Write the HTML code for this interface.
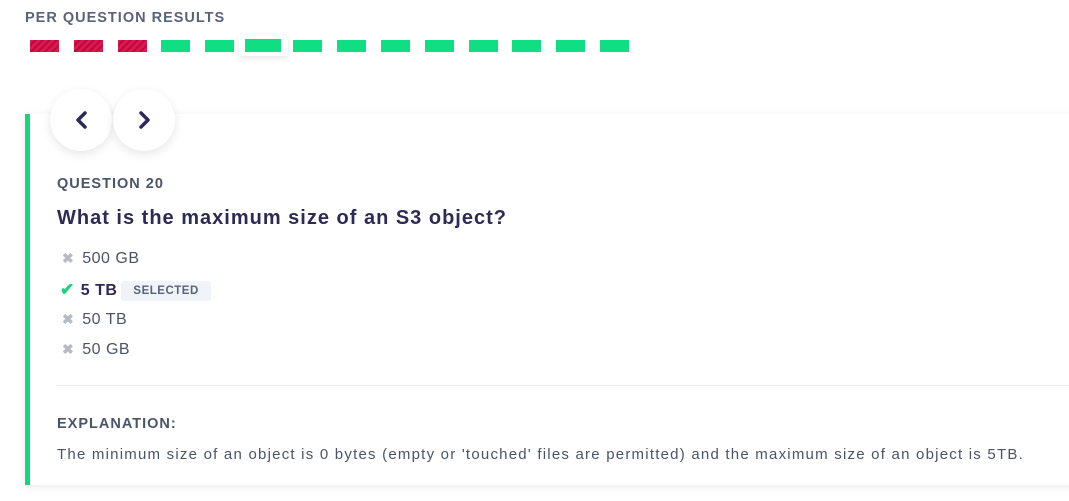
<!DOCTYPE html>
<html><head><style>
body{margin:0;width:1069px;height:501px;background:#fff;font-family:"Liberation Sans",sans-serif;position:relative;overflow:hidden}
.h{position:absolute;left:25px;top:10px;font-size:14.5px;font-weight:bold;color:#5a6478;letter-spacing:1px}
.b{position:absolute;top:40px;height:12px;width:29px;background:#0fdf82}
.r{background:repeating-linear-gradient(135deg,#e0164e 0 3px,#b80c3c 3px 5px)}
.card{position:absolute;left:25px;top:114px;width:1100px;height:371px;background:#fff;border-left:5px solid #17d57c;box-shadow:0 2px 10px rgba(0,0,0,.08)}
.c{position:absolute;top:89px;width:62px;height:62px;border-radius:50%;background:#fff;box-shadow:0 3px 10px rgba(0,0,0,.1)}
.t{position:absolute;left:57px;white-space:nowrap}
.o{font-size:16px;color:#4a5468;letter-spacing:.5px}
.x{color:#b5bac4;font-weight:bold;margin-right:8px;font-size:14px}
</style></head><body>
<div class="h">PER QUESTION RESULTS</div>
<div class="b r" style="left:30px"></div><div class="b r" style="left:74px"></div><div class="b r" style="left:118px"></div>
<div class="b" style="left:161px"></div><div class="b" style="left:205px"></div>
<div style="position:absolute;left:239px;top:35px;width:49px;height:21px;background:#fff;box-shadow:0 2px 6px rgba(0,0,0,.1)"></div>
<div class="b" style="left:245px;top:39px;width:36px;height:13px"></div>
<div class="b" style="left:293px"></div><div class="b" style="left:337px"></div><div class="b" style="left:381px"></div><div class="b" style="left:425px"></div><div class="b" style="left:469px"></div><div class="b" style="left:512px"></div><div class="b" style="left:556px"></div><div class="b" style="left:600px"></div>
<div class="card"></div>
<div class="c" style="left:50px"><svg width="62" height="62"><path d="M35 24l-7 7 7 7" stroke="#2d2a55" stroke-width="3.5" fill="none" stroke-linecap="round" stroke-linejoin="round"/></svg></div>
<div class="c" style="left:113px"><svg width="62" height="62"><path d="M28 24l7 7-7 7" stroke="#2d2a55" stroke-width="3.5" fill="none" stroke-linecap="round" stroke-linejoin="round"/></svg></div>
<div class="t" style="top:176px;font-size:14.5px;font-weight:bold;color:#4a5468;letter-spacing:1px">QUESTION 20</div>
<div class="t" style="top:207px;font-size:20px;font-weight:bold;color:#2d2a55;letter-spacing:1px">What is the maximum size of an S3 object?</div>
<div class="t o" style="top:250px;left:62px"><span class="x">✖</span>500 GB</div>
<div class="t o" style="top:280px;left:60px"><span style="color:#17d57c;font-weight:bold;margin-right:6px;font-size:17px">✔</span><b style="color:#2d2a55">5 TB</b><span style="display:inline-block;margin-left:4px;padding:4px 12px;background:#f0f3f7;border-radius:3px;font-size:11.5px;font-weight:bold;color:#5a6478;letter-spacing:.5px;vertical-align:1px">SELECTED</span></div>
<div class="t o" style="top:311px;left:62px"><span class="x">✖</span>50 TB</div>
<div class="t o" style="top:341px;left:62px"><span class="x">✖</span>50 GB</div>
<div style="position:absolute;left:56px;top:385px;width:1013px;height:1px;background:#e8eaee"></div>
<div class="t" style="top:416px;font-size:14.5px;font-weight:bold;color:#4a5468;letter-spacing:1px">EXPLANATION:</div>
<div class="t" style="top:446px;font-size:15px;color:#4a5468;letter-spacing:1.22px">The minimum size of an object is 0 bytes (empty or 'touched' files are permitted) and the maximum size of an object is 5TB.</div>
</body></html>
